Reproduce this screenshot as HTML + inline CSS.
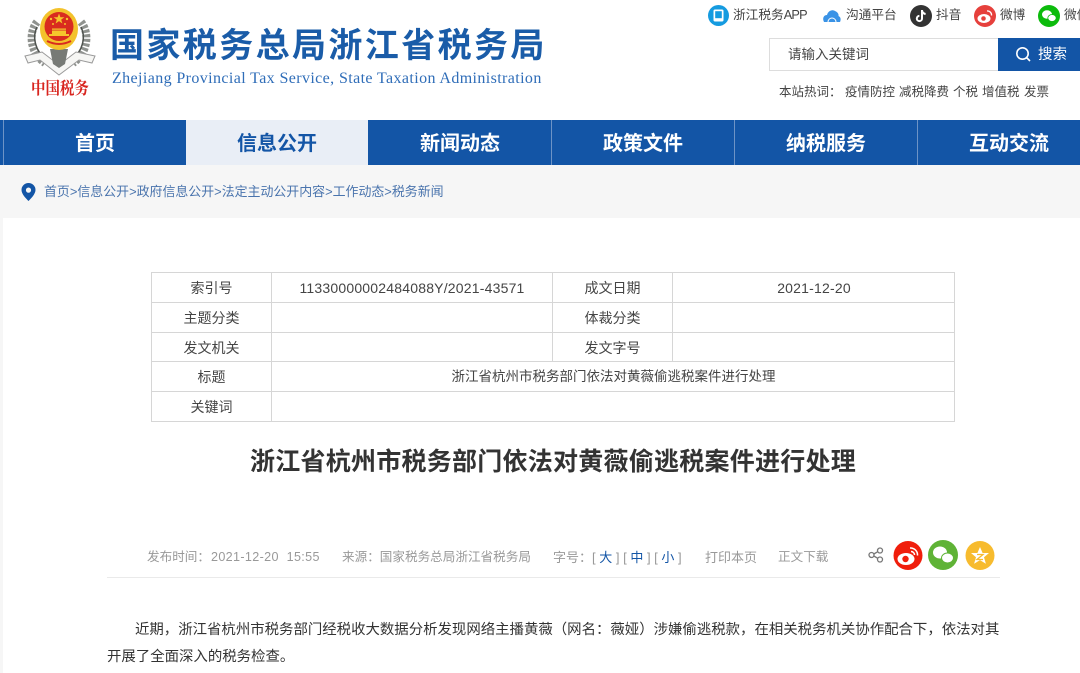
<!DOCTYPE html>
<html lang="zh"><head><meta charset="utf-8"><title>浙江省税务局</title>
<style>
html,body{margin:0;padding:0;background:#fff}
#p{position:relative;width:1080px;height:673px;overflow:hidden;background:#fff;font-family:"Liberation Sans","Noto Sans CJK SC",sans-serif;color:#333}
.t{position:absolute;white-space:nowrap}
.b{position:absolute}
svg{position:absolute;overflow:visible}
.nav{position:absolute;top:120px;height:45px;line-height:48px;text-align:center;font-size:20px;font-weight:700;color:#fff;width:182px;background:#1355a6}
.c{position:absolute;text-align:center;font-size:14px;color:#444;line-height:30px;height:30px;white-space:nowrap}
.m{position:absolute;white-space:nowrap;font-size:12.600px;color:#999;top:548px;line-height:19px}
.top{top:6px;font-size:12.700px;line-height:19px;color:#444}
.hot{top:83px;font-size:12.500px;line-height:18px;color:#444}
</style></head><body><div id="p">

<svg style="left:20px;top:5px" width="80" height="100" viewBox="0 0 80 100">
<path d="M17 17C8 28 10 48 25 58M61 17C70 28 68 48 53 58" fill="none" stroke="#8f928e" stroke-width="8" stroke-dasharray="3 1.500"/>
<path d="M17 22C12 32 15 46 26 54M61 22C66 32 63 46 52 54" fill="none" stroke="#4f534f" stroke-width="1.500"/>
<path d="M5 51L22 47 39 60 56 47 75 51 72 58 59 55 39 70 20 55 8 58Z" fill="#f6f6f4" stroke="#9a9a9a" stroke-width="1"/>
<path d="M30 44h18l-3 15-6 4-6-4z" fill="#777a76"/>
<ellipse cx="39" cy="24" rx="19" ry="21" fill="#f3c22b"/>
<circle cx="39" cy="21.500" r="14.500" fill="#d92b1f"/>
<path d="M39 8.500l1.400 3.800h4l-3.200 2.300 1.200 3.900-3.400-2.400-3.400 2.400 1.200-3.900-3.200-2.300h4z" fill="#f5c52c"/>
<circle cx="31" cy="14" r="1.200" fill="#f5c52c"/><circle cx="47" cy="14" r="1.200" fill="#f5c52c"/>
<circle cx="33" cy="19" r="1" fill="#f5c52c"/><circle cx="45" cy="19" r="1" fill="#f5c52c"/>
<path d="M29 31h20v-2h-3v-3.500h-14v3.500h-3zM32 23.500h14v1.300h-14z" fill="#f5c52c"/>
<path d="M27 36q12 6 24 0" fill="none" stroke="#d92b1f" stroke-width="2"/>
</svg>
<div class="t" style="left:31px;top:75px;font:700 17px/24px 'Noto Serif CJK SC',serif;color:#d8251f;letter-spacing:0;transform:scaleX(.85);transform-origin:left top">中国税务</div>

<div class="t" style="left:110px;top:23px;font-size:34px;font-weight:700;line-height:46px;color:#1a5ca8;letter-spacing:2.400px">国家税务总局浙江省税务局</div>
<div class="t" style="left:112px;top:69px;font:16px/20px 'Liberation Serif',serif;color:#2f6db8;letter-spacing:.39px">Zhejiang Provincial Tax Service, State Taxation Administration</div>

<svg style="left:708px;top:5px" width="21" height="21"><circle cx="10.500" cy="10.500" r="10.500" fill="#159be0"/><rect x="5.500" y="4.500" width="10" height="12" rx="1.500" fill="#fff"/><rect x="7.200" y="6.200" width="6.600" height="7" fill="#159be0"/></svg>
<div class="t top" style="left:733px">浙江税务<span style="letter-spacing:-.8px">APP</span></div>
<svg style="left:823px;top:9px" width="18" height="13" viewBox="0 0 18 13"><path d="M1 13C-1 9 1 6 4 6 5 2 9 0 12 2 15 3 16 6 15.500 7 18 8 18 11 17 13Z" fill="#3a93e6"/><path d="M5 13a4 4 0 0 1 8 0" fill="none" stroke="#fff" stroke-width="1"/></svg>
<div class="t top" style="left:846px">沟通平台</div>
<svg style="left:910px;top:5px" width="22" height="22"><circle cx="11" cy="11" r="11" fill="#333"/><path d="M12 5v8.500a2.600 2.600 0 1 1-2.600-2.600M12 5.500c.4 2 1.600 3.200 3.600 3.500" fill="none" stroke="#fff" stroke-width="2"/></svg>
<div class="t top" style="left:936px">抖音</div>
<svg style="left:974px;top:5px" width="22" height="22"><circle cx="11" cy="11" r="11" fill="#e6403c"/><ellipse cx="10" cy="13.500" rx="6.500" ry="4.500" fill="#fff"/><circle cx="9.500" cy="13.500" r="2.300" fill="#e6403c"/><path d="M13 6a4 4 0 0 1 4.500 4.500" fill="none" stroke="#fff" stroke-width="1.300"/></svg>
<div class="t top" style="left:1000px">微博</div>
<svg style="left:1038px;top:5px" width="22" height="22"><circle cx="11" cy="11" r="11" fill="#0cbb0c"/><ellipse cx="9" cy="9.500" rx="5" ry="4.200" fill="#fff"/><ellipse cx="14" cy="13" rx="4.200" ry="3.500" fill="#fff" stroke="#0cbb0c" stroke-width=".8"/></svg>
<div class="t top" style="left:1064px">微信</div>

<div class="b" style="left:769px;top:38px;width:228px;height:31px;border:1px solid #ddd;border-right:0"></div>
<div class="t" style="left:788px;top:45px;font-size:13.500px;line-height:20px;color:#444">请输入关键词</div>
<div class="b" style="left:998px;top:38px;width:82px;height:33px;background:#1355a6"></div>
<svg style="left:1015px;top:46px" width="17" height="17"><circle cx="7.500" cy="7.500" r="5.700" fill="none" stroke="#fff" stroke-width="1.600"/><path d="M11.500 11.500l3.500 3.500" stroke="#fff" stroke-width="1.600"/></svg>
<div class="t" style="left:1038px;top:45px;font-size:14.500px;line-height:20px;color:#fff">搜索</div>

<div class="t hot" style="left:779px">本站热词：</div>
<div class="t hot" style="left:845px">疫情防控</div>
<div class="t hot" style="left:899px">减税降费</div>
<div class="t hot" style="left:953px">个税</div>
<div class="t hot" style="left:982px">增值税</div>
<div class="t hot" style="left:1024px">发票</div>

<div class="b" style="left:0;top:120px;width:1080px;height:45px;background:#1355a6"></div>
<div class="b" style="left:3px;top:120px;width:1px;height:45px;background:#6d93c6"></div>
<div class="nav" style="left:4px">首页</div>
<div class="nav" style="left:186px;background:#e9eef6;color:#1355a6">信息公开</div>
<div class="nav" style="left:369px">新闻动态</div>
<div class="nav" style="left:552px">政策文件</div>
<div class="nav" style="left:735px">纳税服务</div>
<div class="nav" style="left:918px">互动交流</div>
<div class="b" style="left:551px;top:120px;width:1px;height:45px;background:#6d93c6"></div>
<div class="b" style="left:734px;top:120px;width:1px;height:45px;background:#6d93c6"></div>
<div class="b" style="left:917px;top:120px;width:1px;height:45px;background:#6d93c6"></div>

<div class="b" style="left:0;top:165px;width:1080px;height:53px;background:#f6f6f6"></div>
<div class="b" style="left:0;top:218px;width:3px;height:455px;background:#f6f6f6"></div>
<svg style="left:21px;top:183px" width="15" height="18" viewBox="0 0 15 18"><path fill-rule="evenodd" d="M7.500 0A7 7 0 0 1 14.500 7C14.500 11 10 15.500 7.500 18 5 15.500.5 11 .5 7A7 7 0 0 1 7.500 0ZM7.500 4.500A2.600 2.600 0 1 0 7.500 9.700 2.600 2.600 0 1 0 7.500 4.500Z" fill="#1355a6"/></svg>
<div class="t" style="left:44px;top:183px;font-size:12.930px;line-height:18px;color:#4a74ad">首页&gt;信息公开&gt;政府信息公开&gt;法定主动公开内容&gt;工作动态&gt;税务新闻</div>

<div class="b" style="left:151px;top:272px;width:802px;height:148px;border:1px solid #d6d6d6"></div>
<div class="b" style="left:152px;top:302px;width:802px;height:1px;background:#d6d6d6"></div>
<div class="b" style="left:152px;top:332px;width:802px;height:1px;background:#d6d6d6"></div>
<div class="b" style="left:152px;top:361px;width:802px;height:1px;background:#d6d6d6"></div>
<div class="b" style="left:152px;top:391px;width:802px;height:1px;background:#d6d6d6"></div>
<div class="b" style="left:271px;top:273px;width:1px;height:148px;background:#d6d6d6"></div>
<div class="b" style="left:552px;top:273px;width:1px;height:88px;background:#d6d6d6"></div>
<div class="b" style="left:672px;top:273px;width:1px;height:88px;background:#d6d6d6"></div>

<div class="c" style="left:152px;width:119px;top:273px">索引号</div>
<div class="c" style="left:272px;width:280px;top:273px;letter-spacing:.2px">11330000002484088Y/2021-43571</div>
<div class="c" style="left:553px;width:119px;top:273px">成文日期</div>
<div class="c" style="left:673px;width:282px;top:273px;letter-spacing:.2px">2021-12-20</div>
<div class="c" style="left:152px;width:119px;top:303px">主题分类</div>
<div class="c" style="left:553px;width:119px;top:303px">体裁分类</div>
<div class="c" style="left:152px;width:119px;top:333px">发文机关</div>
<div class="c" style="left:553px;width:119px;top:333px">发文字号</div>
<div class="c" style="left:152px;width:119px;top:362px">标题</div>
<div class="c" style="left:272px;width:683px;top:362px;font-size:13.500px">浙江省杭州市税务部门依法对黄薇偷逃税案件进行处理</div>
<div class="c" style="left:152px;width:119px;top:392px">关键词</div>

<div class="t" style="left:250px;top:444px;font-size:25px;font-weight:700;line-height:36px;color:#333;letter-spacing:.25px">浙江省杭州市税务部门依法对黄薇偷逃税案件进行处理</div>

<div class="m" style="left:147px">发布时间：<span style="margin-left:1px;letter-spacing:.35px">2021-12-20&nbsp; 15:55</span></div>
<div class="m" style="left:342px">来源：国家税务总局浙江省税务局</div>
<div class="m" style="left:553px;font-size:13px">字号：[ <span style="color:#1355a6">大</span> ] [ <span style="color:#1355a6">中</span> ] [ <span style="color:#1355a6">小</span> ]</div>
<div class="m" style="left:705px;font-size:13px">打印本页</div>
<div class="m" style="left:778px">正文下载</div>

<svg style="left:868px;top:547px" width="16" height="16" fill="none" stroke="#777" stroke-width="1.300"><circle cx="3.500" cy="8" r="2.500"/><circle cx="12" cy="3.500" r="2.500"/><circle cx="12" cy="12.500" r="2.500"/><path d="M5.800 7l4-2.300M5.800 9l4 2.300"/></svg>
<svg style="left:893px;top:541px" width="30" height="29"><circle cx="15" cy="14.500" r="14.500" fill="#f01e0c"/><ellipse cx="13" cy="18" rx="8.500" ry="6" fill="#fff"/><circle cx="12.500" cy="18" r="3.200" fill="#f01e0c"/><path d="M17 7a7 7 0 0 1 7.500 7.500M18 10.500a3.500 3.500 0 0 1 3.500 3.500" fill="none" stroke="#fff" stroke-width="1.500"/></svg>
<svg style="left:928px;top:540px" width="30" height="30"><circle cx="15" cy="15" r="15" fill="#5fb336"/><ellipse cx="12" cy="12.500" rx="7" ry="6" fill="#fff"/><ellipse cx="19.500" cy="18" rx="6" ry="5" fill="#fff" stroke="#5fb336"/></svg>
<svg style="left:965px;top:541px" width="30" height="29"><circle cx="15" cy="14.500" r="14.500" fill="#f7bb2e"/><path d="M15 6l2.600 6h6.400l-5 4.200 1.900 6.500-5.900-3.600-5.900 3.600 1.900-6.500-5-4.200h6.400z" fill="#fff"/><path d="M12 13.500h6l-6 5h6" fill="none" stroke="#f7bb2e" stroke-width="1.300"/></svg>

<div class="b" style="left:107px;top:577px;width:893px;height:1px;background:#eaeaea"></div>

<div class="t" style="left:135px;top:619px;font-size:14.420px;line-height:22px;color:#333">近期，浙江省杭州市税务部门经税收大数据分析发现网络主播黄薇（网名：薇娅）涉嫌偷逃税款，在相关税务机关协作配合下，依法对其</div>
<div class="t" style="left:107px;top:646px;font-size:14.420px;line-height:22px;color:#333">开展了全面深入的税务检查。</div>
</div></body></html>
